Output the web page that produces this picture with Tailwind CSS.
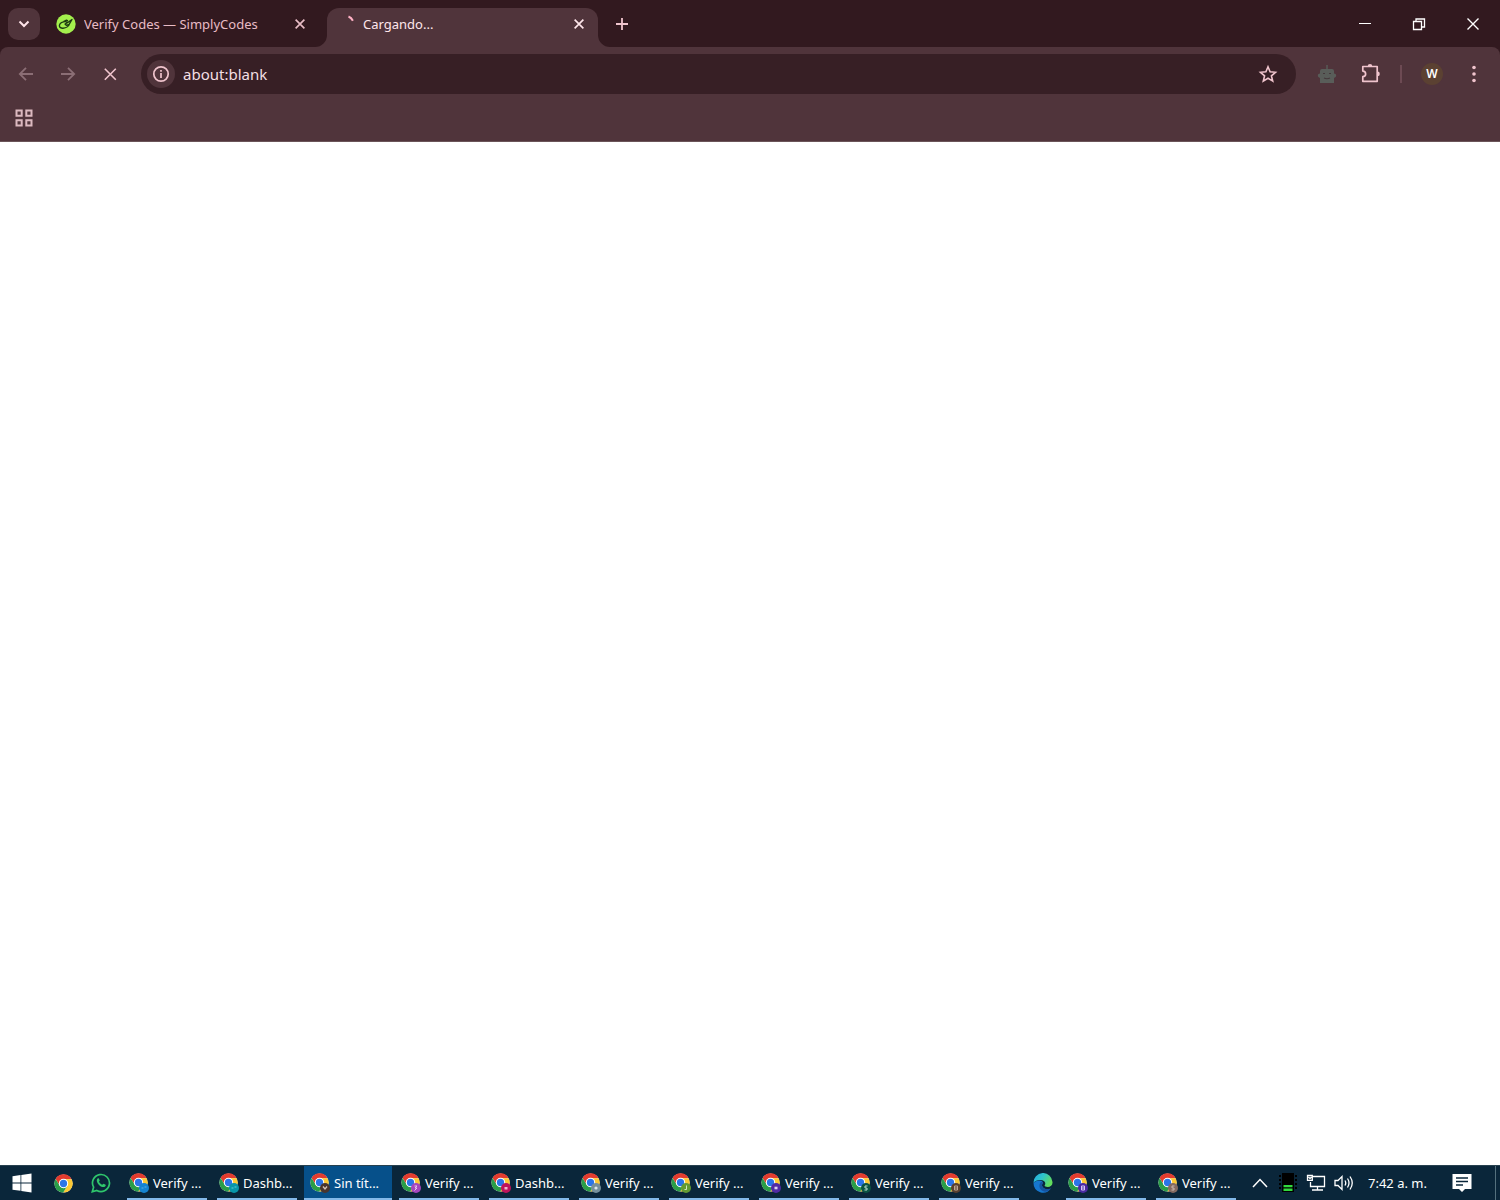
<!DOCTYPE html>
<html lang="es">
<head>
<meta charset="utf-8">
<meta name="viewport" content="width=device-width, initial-scale=1">
<title>Cargando...</title>
<script src="https://cdn.jsdelivr.net/npm/@tailwindcss/browser@4"></script>
</head>
<body class="flex min-h-screen flex-col bg-white font-['Noto_Sans',sans-serif]">
<svg class="hidden" aria-hidden="true">
  <symbol id="chrome" viewBox="0 0 48 48">
    <circle cx="24" cy="24" r="23" fill="#fff"/>
    <path d="M24 13h20.300A23 23 0 0 0 4.100 12.500L14.500 29.500A11 11 0 0 1 24 13z" fill="#e33b2e"/>
    <path d="M33.500 29.500L23.400 47A23 23 0 0 0 44.300 13H24a11 11 0 0 1 9.500 16.500z" fill="#fcc934"/>
    <path d="M14.500 29.500L4.100 12.500A23 23 0 0 0 23.400 47L33.500 29.500a11 11 0 0 1-19 0z" fill="#2a9d48"/>
    <circle cx="24" cy="24" r="11.800" fill="#fff"/>
    <circle cx="24" cy="24" r="9.200" fill="#2b75e8"/>
  </symbol>
  <symbol id="close" viewBox="0 0 16 16"><path d="M3 3l10 10M13 3L3 13" fill="none" stroke="currentColor" stroke-width="1.900"/></symbol>
</svg>

<header class="shrink-0 bg-[#32191f]">
  <div class="flex h-[47px] items-center">
    <button aria-label="Buscar pestañas" class="ml-2 flex size-8 items-center justify-center rounded-[10px] bg-[#50343b] text-[#ffe4ea]">
      <svg class="size-4" viewBox="0 0 16 16" fill="none" stroke="currentColor" stroke-width="2"><path d="M3.500 5.500L8 10l4.500-4.500"/></svg>
    </button>
    <div class="flex w-[287px] items-center pl-4 text-[#e8bcc5]">
      <svg class="size-5 shrink-0" viewBox="0 0 20 20"><circle cx="10" cy="10" r="9.700" fill="#a4f04d"/><path d="M16 5.500l-4.600 3.200c-1-1.500-2.500-1.400-4-.9-2 .6-4 2.200-4 4 0 1.700 1.600 2.500 3.600 2.400 3.200-.2 6-2.200 6.400-4.400L16 5.500zM11.400 8.700L9 10l1.300 1.200 2.400-.6M7.500 7.600l3-1.400 1.500.6" fill="none" stroke="#1d3b12" stroke-width="1.400" stroke-linejoin="round"/></svg>
      <span class="ml-2 flex-1 truncate text-[13px] leading-5">Verify Codes — SimplyCodes</span>
      <button aria-label="Cerrar pestaña" class="mr-5"><svg class="size-3.5"><use href="#close"/></svg></button>
    </div>
    <div class="relative flex w-[271px] items-center self-stretch pt-2">
      <svg class="absolute -left-3 bottom-0 size-3" viewBox="0 0 12 12"><path d="M12 0v12H0A12 12 0 0 0 12 0z" fill="#50343b"/></svg>
      <svg class="absolute -right-3 bottom-0 size-3" viewBox="0 0 12 12"><path d="M0 0v12h12A12 12 0 0 1 0 0z" fill="#50343b"/></svg>
      <div class="flex h-full w-full items-center rounded-t-xl bg-[#50343b] pb-2 pl-4 text-[#ffe6eb]">
        <svg class="size-5" viewBox="0 0 20 20"><path d="M5.500 2.500c2 .8 3.400 2.200 4.400 4.200" fill="none" stroke="#ffb1c5" stroke-width="2"/></svg>
        <span class="flex-1 text-[13px] leading-5">Cargando...</span>
        <button aria-label="Cerrar pestaña" class="mr-3"><svg class="size-3.5"><use href="#close"/></svg></button>
      </div>
    </div>
    <button aria-label="Nueva pestaña" class="ml-4 text-[#f0c4cd]"><svg class="size-4" viewBox="0 0 16 16" stroke="currentColor" stroke-width="1.800"><path d="M8 2v12M2 8h12"/></svg></button>
    <div class="ml-auto flex text-white">
      <button aria-label="Minimizar" class="flex w-[54px] justify-center"><svg class="size-4" viewBox="0 0 16 16"><path d="M2 7.500h12" stroke="currentColor"/></svg></button>
      <button aria-label="Restaurar" class="flex w-[54px] justify-center"><svg class="size-4" viewBox="0 0 16 16" fill="none" stroke="currentColor" stroke-width="1.300"><path d="M2.500 5.500h8v8h-8zM5 5.500V3h8.500v8h-3"/></svg></button>
      <button aria-label="Cerrar" class="flex w-[54px] justify-center"><svg class="size-4" viewBox="0 0 16 16" stroke="currentColor" stroke-width="1.400"><path d="M2.500 2.500l11 11M13.500 2.500l-11 11"/></svg></button>
    </div>
  </div>

  <div class="rounded-t-lg border-b border-[#6b5559] bg-[#50343b] text-[#f0c4cd]">
    <div class="flex items-center pt-[7px]">
      <button aria-label="Atrás" class="ml-4 text-[#8b6e75]"><svg class="size-5" viewBox="0 0 20 20" fill="none" stroke="currentColor" stroke-width="1.800"><path d="M17 10H4M10 3.800L3.800 10l6.200 6.200"/></svg></button>
      <button aria-label="Adelante" class="ml-[22px] text-[#8b6e75]"><svg class="size-5" viewBox="0 0 20 20" fill="none" stroke="currentColor" stroke-width="1.800"><path d="M3 10h13M10 3.800l6.200 6.200-6.200 6.200"/></svg></button>
      <button aria-label="Detener" class="ml-[22px]"><svg class="size-5" viewBox="0 0 20 20" stroke="currentColor" stroke-width="1.600"><path d="M4.800 4.800l11 11M15.800 4.800l-11 11"/></svg></button>
      <div class="ml-[21px] flex h-10 flex-1 items-center rounded-full bg-[#371f25] pr-[18px] pl-1.5">
        <button aria-label="Información del sitio" class="flex size-7 items-center justify-center rounded-full bg-[#50343b]"><svg class="size-[18px]" viewBox="0 0 18 18" fill="none" stroke="currentColor" stroke-width="1.700"><circle cx="9" cy="9" r="7.200"/><path d="M9 8v5M9 5v1.800"/></svg></button>
        <input aria-label="Dirección" value="about:blank" class="ml-2 min-w-0 flex-1 bg-transparent text-[15px] text-[#f3dfe3] outline-none">
        <button aria-label="Añadir a marcadores"><svg class="size-5" viewBox="0 0 20 20" fill="none" stroke="currentColor" stroke-width="1.600"><path d="M10 2.800l2.100 5 5.400.5-4.100 3.500 1.300 5.300-4.700-2.900-4.700 2.900 1.300-5.300-4.100-3.500 5.400-.5z"/></svg></button>
      </div>
      <button aria-label="Extensión" class="ml-5 text-[#595d59]"><svg class="size-[22px]" viewBox="0 0 22 22"><path d="M10.300 2h1.400v4H16q2 0 2 2v2.500q2.200.2 2.200 2T18 15v5H4v-5q-2.200-.7-2.200-2.500t2.200-2V8q0-2 2-2h4.300z" fill="currentColor"/><path d="M7 10.500h2M13 10.500h2M8 15q3 1.500 6 0" stroke="#44383b" stroke-width="1.200" fill="none"/></svg></button>
      <button aria-label="Extensiones" class="ml-[22px]"><svg class="size-[22px]" viewBox="0 0 22 22"><path d="M2.800 3.500h14.400v14.800H2.800v-4.600c3.800-.4 3.800-5.200 0-5.600z" fill="none" stroke="currentColor" stroke-width="1.700" stroke-linejoin="round"/><path d="M7.700 3.300a2.300 2.300 0 0 1 4.600 0zM17.500 8.600a2.300 2.300 0 0 1 0 4.600z" fill="currentColor"/></svg></button>
      <span class="ml-[18px] h-[18px] w-0.5 bg-[#6d4a53]"></span>
      <button aria-label="Perfil" class="ml-[19px] flex size-[22px] items-center justify-center rounded-full bg-[#5b4132] text-xs font-semibold text-white">W</button>
      <button aria-label="Menú" class="mr-4 ml-[21px]"><svg class="size-5" viewBox="0 0 20 20" fill="currentColor"><circle cx="10" cy="3.500" r="1.800"/><circle cx="10" cy="10" r="1.800"/><circle cx="10" cy="16.500" r="1.800"/></svg></button>
    </div>
    <div class="flex h-[47px] items-center pl-[15px] text-[#dcb9c0]">
      <button aria-label="Grupos de pestañas"><svg class="size-[18px]" viewBox="0 0 18 18" fill="none" stroke="currentColor" stroke-width="2"><path d="M1.500 1.500h5.200v5.200H1.500zM11.300 1.500h5.200v5.200h-5.200zM1.500 11.300h5.200v5.200H1.500zM11.300 11.300h5.200v5.200h-5.200z"/></svg></button>
    </div>
  </div>
</header>

<main class="flex-1 bg-white"></main>

<footer class="flex h-[35px] shrink-0 items-stretch border-t border-[#27414f] bg-[#0a263a] text-[13px] leading-5 text-white">
  <button aria-label="Inicio" class="flex w-[45px] items-center justify-center"><svg class="mr-0.5 size-5" viewBox="0 0 20 20" fill="#fff"><path d="M.500 3.200l8-1.100v7.400h-8zM9.300 2l10.200-1.500v9H9.300zM.500 10.400h8v7.400l-8-1.100zM9.300 10.400h10.200v9.100L9.300 18z"/></svg></button>
  <button aria-label="Chrome" class="flex w-[37px] items-center justify-center"><svg class="size-[19px]"><use href="#chrome"/></svg></button>
  <button aria-label="WhatsApp" class="flex w-[37px] items-center justify-center"><svg class="size-5" viewBox="0 0 20 20"><path d="M1.300 18.700l1.300-4.500a8.500 8.500 0 1 1 3.200 3.200z" fill="none" stroke="#2fc66c" stroke-width="1.700"/><path d="M6.200 5.800c.7-.9 1.500-.7 1.700-.2l.8 1.800c0 .6-.8 1-.7 1.400.7 1.400 1.800 2.300 3.200 2.900.5 0 .9-1.200 1.400-1l2 1c.4.4 0 1.500-.8 2-1.500.9-3.500.2-5.300-1.200C6.700 10.800 5 8.200 6.200 5.800z" fill="#2fc66c"/></svg></button>
  <div class="flex pl-[3px]">
    <button class="relative mx-px flex w-[88px] items-center pl-1.5"><svg class="size-5" viewBox="0 0 20 20"><use href="#chrome" width="19" height="19"/><circle cx="15" cy="15" r="5" fill="#1483d1"/><path d="M12.500 15h2M15.500 14h2" stroke="#59b1e6"/></svg><span class="ml-1">Verify ...</span><span class="absolute inset-x-1 bottom-0 h-0.5 bg-[#83b9e9]"></span></button>
    <button class="relative mx-px flex w-[88px] items-center pl-1.5"><svg class="size-5" viewBox="0 0 20 20"><use href="#chrome" width="19" height="19"/><circle cx="15" cy="15" r="5" fill="#0795a8"/><path d="M12.500 15h2M15.500 14h2" stroke="#5ad0d8"/></svg><span class="ml-1">Dashb...</span><span class="absolute inset-x-1 bottom-0 h-0.5 bg-[#83b9e9]"></span></button>
    <button class="relative mx-0.5 flex w-[88px] items-center bg-[#06508a] pl-1.5"><svg class="size-5" viewBox="0 0 20 20"><use href="#chrome" width="19" height="19"/><circle cx="15" cy="15" r="5" fill="#49352f"/><path d="M13 13.500l2 2.500 2-2.500" fill="none" stroke="#d6c5bb" stroke-width="1.300"/></svg><span class="ml-1">Sin tít...</span><span class="absolute inset-x-0 bottom-0 h-0.5 bg-[#83b9e9]"></span></button>
    <button class="relative mx-px flex w-[88px] items-center pl-1.5"><svg class="size-5" viewBox="0 0 20 20"><use href="#chrome" width="19" height="19"/><circle cx="15" cy="15" r="5" fill="#a546bd"/><path d="M13.500 13h2.500l-2 2h2l-2.500 2.500" fill="none" stroke="#e8c5ef"/></svg><span class="ml-1">Verify ...</span><span class="absolute inset-x-1 bottom-0 h-0.5 bg-[#83b9e9]"></span></button>
    <button class="relative mx-px flex w-[88px] items-center pl-1.5"><svg class="size-5" viewBox="0 0 20 20"><use href="#chrome" width="19" height="19"/><circle cx="15" cy="15" r="5" fill="#bd145c"/><path d="M13.500 14h3v2.500h-3z" fill="#f0b8ce"/></svg><span class="ml-1">Dashb...</span><span class="absolute inset-x-1 bottom-0 h-0.5 bg-[#83b9e9]"></span></button>
    <button class="relative mx-px flex w-[88px] items-center pl-1.5"><svg class="size-5" viewBox="0 0 20 20"><use href="#chrome" width="19" height="19"/><circle cx="15" cy="15" r="5" fill="#75909c"/><circle cx="15" cy="15" r="1.600" fill="#dce7ec"/></svg><span class="ml-1">Verify ...</span><span class="absolute inset-x-1 bottom-0 h-0.5 bg-[#83b9e9]"></span></button>
    <button class="relative mx-px flex w-[88px] items-center pl-1.5"><svg class="size-5" viewBox="0 0 20 20"><use href="#chrome" width="19" height="19"/><circle cx="15" cy="15" r="5" fill="#649b33"/><path d="M15.500 12.500v4h-2" fill="none" stroke="#d5e8c1"/></svg><span class="ml-1">Verify ...</span><span class="absolute inset-x-1 bottom-0 h-0.5 bg-[#83b9e9]"></span></button>
    <button class="relative mx-px flex w-[88px] items-center pl-1.5"><svg class="size-5" viewBox="0 0 20 20"><use href="#chrome" width="19" height="19"/><circle cx="15" cy="15" r="5" fill="#512aa5"/><path d="M13.500 13.700h3v2.600h-3z" fill="#dfd3f4"/></svg><span class="ml-1">Verify ...</span><span class="absolute inset-x-1 bottom-0 h-0.5 bg-[#83b9e9]"></span></button>
    <button class="relative mx-px flex w-[88px] items-center pl-1.5"><svg class="size-5" viewBox="0 0 20 20"><use href="#chrome" width="19" height="19"/><circle cx="15" cy="15" r="5" fill="#0a5444"/><path d="M16.500 13h-2.500v2h2v2h-2.500" fill="none" stroke="#b9dfd1"/></svg><span class="ml-1">Verify ...</span><span class="absolute inset-x-1 bottom-0 h-0.5 bg-[#83b9e9]"></span></button>
    <button class="relative mx-px flex w-[88px] items-center pl-1.5"><svg class="size-5" viewBox="0 0 20 20"><use href="#chrome" width="19" height="19"/><circle cx="15" cy="15" r="5" fill="#59402f"/><path d="M13.500 13h3v4h-3zM13.500 15h3" fill="none" stroke="#bda595"/></svg><span class="ml-1">Verify ...</span><span class="absolute inset-x-1 bottom-0 h-0.5 bg-[#83b9e9]"></span></button>
    <button aria-label="Edge" class="flex w-[37px] items-center justify-center"><svg class="size-5" viewBox="0 0 20 20"><defs><linearGradient id="edge" x1="0" y1="0" x2="1" y2="0.500"><stop offset="0" stop-color="#22a8e6"/><stop offset="0.500" stop-color="#2fc5c9"/><stop offset="1" stop-color="#63dd5c"/></linearGradient></defs><path d="M.500 10A9.500 9.500 0 0 0 17.800 15.500C14.500 17 9.500 16 9 12.500c-.1-1.300.9-2 .9-3C9.500 7.500 5 6 .500 10z" fill="#1676cd"/><path d="M.500 10A9.500 9.500 0 0 1 19.500 9c.3 3.300-2 5-4.800 5-2.200 0-3.500-.8-3-1.800C13.500 9.500 11 7 7.500 7 4 7 1 8.500.500 10z" fill="url(#edge)"/><path d="M7.500 9.500c-2.500 3.500-.5 8.500 4.500 9.300 2.300-.3 4.600-1.500 5.800-3.300-3.800 1.500-8.300.2-8.800-3-.1-1.300.9-2 .9-3-.5-.9-1.700-.8-2.400 0z" fill="#1552a0"/></svg></button>
    <button class="relative mx-px flex w-[88px] items-center pl-1.5"><svg class="size-5" viewBox="0 0 20 20"><use href="#chrome" width="19" height="19"/><circle cx="15" cy="15" r="5" fill="#4c2aa3"/><path d="M13.500 13h3v4h-3zM13.500 15h3" fill="none" stroke="#d4c9f4"/></svg><span class="ml-1">Verify ...</span><span class="absolute inset-x-1 bottom-0 h-0.5 bg-[#83b9e9]"></span></button>
    <button class="relative mx-px flex w-[88px] items-center pl-1.5"><svg class="size-5" viewBox="0 0 20 20"><use href="#chrome" width="19" height="19"/><circle cx="15" cy="15" r="5" fill="#856a61"/><path d="M16.500 13h-2.500v2h2v2h-2.500" fill="none" stroke="#cbb9b1"/></svg><span class="ml-1">Verify ...</span><span class="absolute inset-x-1 bottom-0 h-0.5 bg-[#83b9e9]"></span></button>
  </div>
  <div class="ml-auto flex items-center">
    <button aria-label="Mostrar iconos ocultos"><svg class="size-4" viewBox="0 0 16 16" fill="none" stroke="#fff" stroke-width="1.500"><path d="M1 12l7-7.500 7 7.500"/></svg></button>
    <svg class="ml-2.5 size-5" viewBox="0 0 20 20"><path d="M1 3h2M1 7h2M1 11h2M1 15h2M17 3h2M17 7h2M17 11h2M17 15h2" stroke="#000" stroke-width="2"/><path d="M4 0h12v19H4z" fill="#000"/><path d="M5.500 12h9v2.200h-9zM5.500 15.500h9v2.500h-9z" fill="#31d93d"/></svg>
    <svg class="ml-2 size-5" viewBox="0 0 20 20" fill="none" stroke="#fff" stroke-width="1.300"><path d="M6.500 3.500h12v10h-14V9M1.500 2.500h4.800v4.800H1.500zM2.500 4l1.500 1.500 1.500-1.500M11.500 13.500v3M6 17h11"/></svg>
    <svg class="ml-2 size-5" viewBox="0 0 20 20" fill="none" stroke="#fff" stroke-width="1.300"><path d="M1 7.500h3l4-4v13l-4-4H1zM11 7.500q1.500 2.500 0 5M13.500 5.500q3 4.500 0 9M16 3.500q4.500 6.500 0 13"/></svg>
    <time class="ml-3.5 w-[60px] whitespace-nowrap">7:42 a. m.</time>
    <button aria-label="Notificaciones" class="ml-6"><svg class="size-5" viewBox="0 0 20 20"><path d="M.500 1h19v15H13l-3 3-3-3H.500z" fill="#fff"/><path d="M4 5h12M4 8.500h12M4 12h7" stroke="#0a263a" stroke-width="1.300"/></svg></button>
    <span class="ml-[23px] h-[34px] w-[5px] border-l border-[#54707d]"></span>
  </div>
</footer>
</body>
</html>
